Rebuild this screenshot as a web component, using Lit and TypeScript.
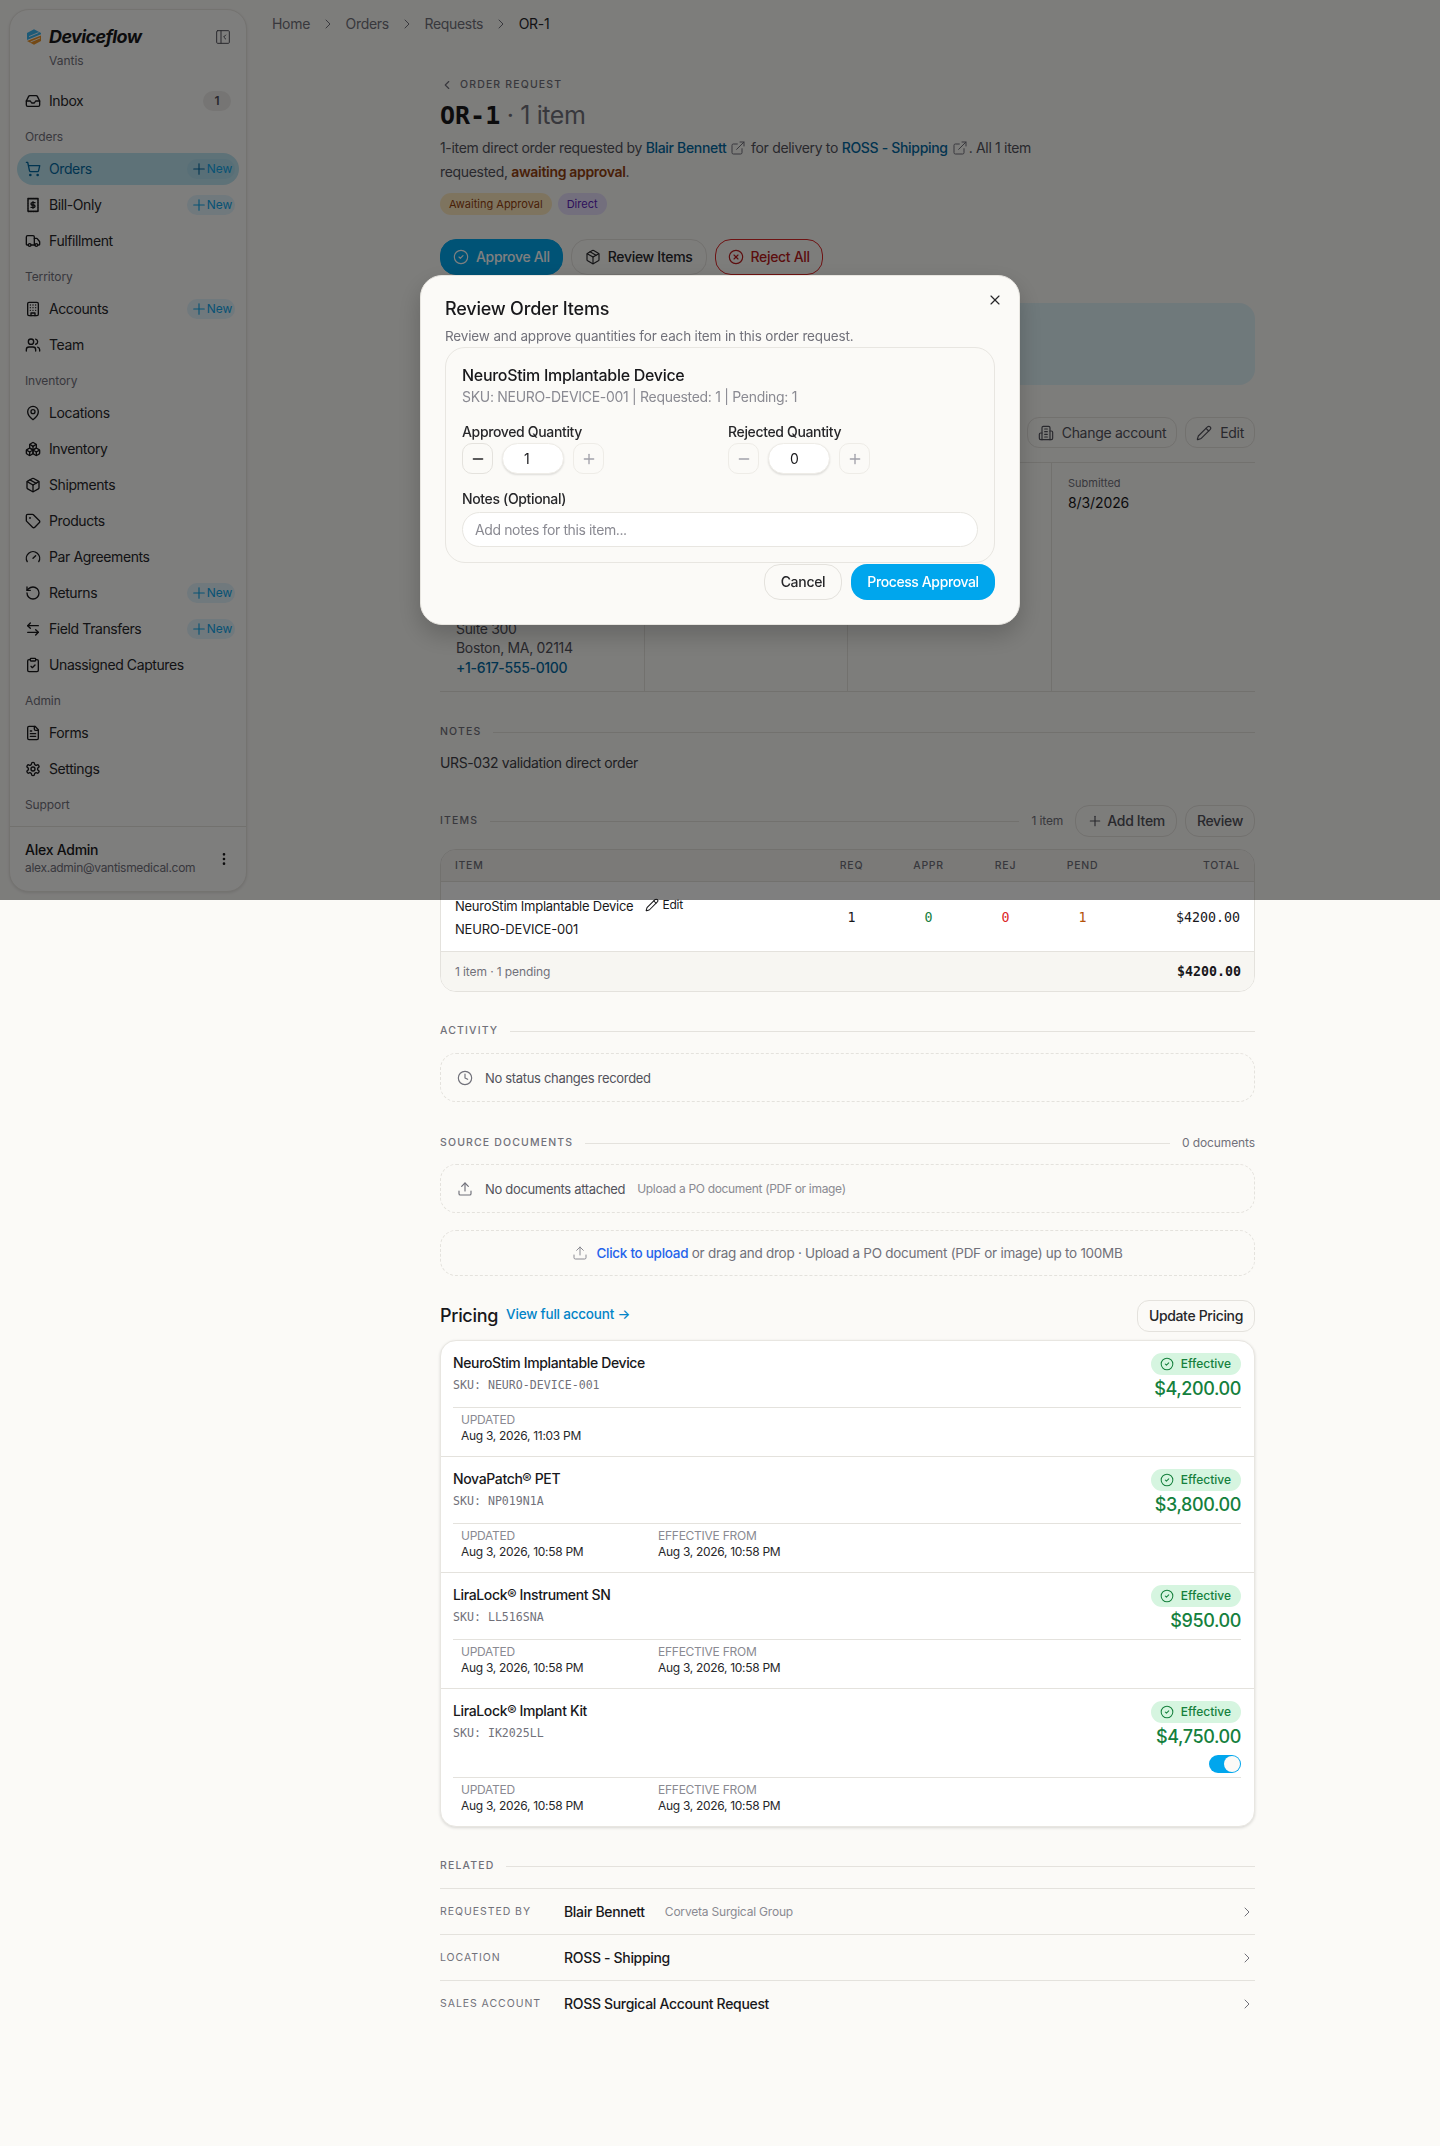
import { LitElement, html, css, svg, nothing } from "lit";
import { customElement } from "lit/decorators.js";

const P: Record<string, any> = {
  inbox: svg`<polyline points="22 12 16 12 14 15 10 15 8 12 2 12"/><path d="M5.45 5.11 2 12v6a2 2 0 0 0 2 2h16a2 2 0 0 0 2-2v-6l-3.45-6.89A2 2 0 0 0 16.76 4H7.24a2 2 0 0 0-1.79 1.11z"/>`,
  cart: svg`<circle cx="8" cy="21" r="1"/><circle cx="19" cy="21" r="1"/><path d="M2.05 2.05h2l2.66 12.42a2 2 0 0 0 2 1.58h9.78a2 2 0 0 0 1.95-1.57l1.65-7.43H5.12"/>`,
  receipt: svg`<rect x="4.5" y="2.5" width="15" height="19" stroke-dasharray="1.4 1.1" stroke-width="2.4"/><path d="M15 8.5h-4.2a1.75 1.75 0 1 0 0 3.5h2.4a1.75 1.75 0 1 1 0 3.5H9"/><path d="M12 7v10"/>`,
  truck: svg`<path d="M14 18V6a2 2 0 0 0-2-2H4a2 2 0 0 0-2 2v11a1 1 0 0 0 1 1h2"/><path d="M15 18H9"/><path d="M19 18h2a1 1 0 0 0 1-1v-3.65a1 1 0 0 0-.22-.624l-3.48-4.35A1 1 0 0 0 17.52 8H14"/><circle cx="17" cy="18" r="2"/><circle cx="7" cy="18" r="2"/>`,
  building: svg`<rect x="4" y="2" width="16" height="20" rx="2"/><path d="M9 22v-4h6v4"/><path d="M8 6h.01M16 6h.01M12 6h.01M12 10h.01M12 14h.01M16 10h.01M16 14h.01M8 10h.01M8 14h.01"/>`,
  users: svg`<path d="M16 21v-2a4 4 0 0 0-4-4H6a4 4 0 0 0-4 4v2"/><circle cx="9" cy="7" r="4"/><path d="M22 21v-2a4 4 0 0 0-3-3.87"/><path d="M16 3.13a4 4 0 0 1 0 7.75"/>`,
  pin: svg`<path d="M20 10c0 6-8 12-8 12s-8-6-8-12a8 8 0 0 1 16 0Z"/><circle cx="12" cy="10" r="3"/>`,
  boxes: svg`<path d="M2.97 12.92A2 2 0 0 0 2 14.63v3.24a2 2 0 0 0 .97 1.71l3 1.8a2 2 0 0 0 2.06 0L12 19v-5.5l-5-3-4.03 2.42Z"/><path d="m7 16.5-4.74-2.85"/><path d="m7 16.5 5-3"/><path d="M7 16.5v5.17"/><path d="M12 13.5V19l3.97 2.38a2 2 0 0 0 2.06 0l3-1.8a2 2 0 0 0 .97-1.71v-3.24a2 2 0 0 0-.97-1.71L17 10.5l-5 3Z"/><path d="m17 16.5-5-3"/><path d="m17 16.5 4.74-2.85"/><path d="M17 16.5v5.17"/><path d="M7.97 4.42A2 2 0 0 0 7 6.13v4.37l5 3 5-3V6.13a2 2 0 0 0-.97-1.71l-3-1.8a2 2 0 0 0-2.06 0l-3 1.8Z"/><path d="M12 8 7.26 5.15"/><path d="m12 8 4.74-2.85"/><path d="M12 13.5V8"/>`,
  pkg: svg`<path d="M11 21.73a2 2 0 0 0 2 0l7-4A2 2 0 0 0 21 16V8a2 2 0 0 0-1-1.73l-7-4a2 2 0 0 0-2 0l-7 4A2 2 0 0 0 3 8v8a2 2 0 0 0 1 1.73z"/><path d="M12 22V12"/><polyline points="3.29 7 12 12 20.71 7"/><path d="m7.5 4.27 9 5.15"/>`,
  tag: svg`<path d="M12.586 2.586A2 2 0 0 0 11.172 2H4a2 2 0 0 0-2 2v7.172a2 2 0 0 0 .586 1.414l8.704 8.704a2.426 2.426 0 0 0 3.42 0l6.58-6.58a2.426 2.426 0 0 0 0-3.42z"/><circle cx="7.5" cy="7.5" r=".5"/>`,
  gauge: svg`<path d="m12 14 4-4"/><path d="M3.34 19a10 10 0 1 1 17.32 0"/>`,
  rotate: svg`<path d="M3 12a9 9 0 1 0 9-9 9.75 9.75 0 0 0-6.74 2.74L3 8"/><path d="M3 3v5h5"/>`,
  swap: svg`<path d="M8 3 4 7l4 4"/><path d="M4 7h16"/><path d="m16 21 4-4-4-4"/><path d="M20 17H4"/>`,
  clip: svg`<rect x="8" y="2" width="8" height="4" rx="1"/><path d="M16 4h2a2 2 0 0 1 2 2v14a2 2 0 0 1-2 2H6a2 2 0 0 1-2-2V6a2 2 0 0 1 2-2h2"/><path d="m9 14 2 2 4-4"/>`,
  file: svg`<path d="M15 2H6a2 2 0 0 0-2 2v16a2 2 0 0 0 2 2h12a2 2 0 0 0 2-2V7Z"/><path d="M14 2v4a2 2 0 0 0 2 2h4"/><path d="M10 9H8"/><path d="M16 13H8"/><path d="M16 17H8"/>`,
  gear: svg`<path d="M12.22 2h-.44a2 2 0 0 0-2 2v.18a2 2 0 0 1-1 1.73l-.43.25a2 2 0 0 1-2 0l-.15-.08a2 2 0 0 0-2.73.73l-.22.38a2 2 0 0 0 .73 2.73l.15.1a2 2 0 0 1 1 1.72v.51a2 2 0 0 1-1 1.74l-.15.09a2 2 0 0 0-.73 2.73l.22.38a2 2 0 0 0 2.73.73l.15-.08a2 2 0 0 1 2 0l.43.25a2 2 0 0 1 1 1.73V20a2 2 0 0 0 2 2h.44a2 2 0 0 0 2-2v-.18a2 2 0 0 1 1-1.73l.43-.25a2 2 0 0 1 2 0l.15.08a2 2 0 0 0 2.73-.73l.22-.39a2 2 0 0 0-.73-2.73l-.15-.08a2 2 0 0 1-1-1.74v-.5a2 2 0 0 1 1-1.74l.15-.09a2 2 0 0 0 .73-2.73l-.22-.38a2 2 0 0 0-2.73-.73l-.15.08a2 2 0 0 1-2 0l-.43-.25a2 2 0 0 1-1-1.73V4a2 2 0 0 0-2-2z"/><circle cx="12" cy="12" r="3"/>`,
  panel: svg`<rect x="2.5" y="2.5" width="19" height="19" rx="1.5"/><path d="M9 2.5v19"/><path d="m16 15-3-3 3-3"/>`,
  dots: svg`<circle cx="12" cy="12" r="1"/><circle cx="12" cy="5" r="1"/><circle cx="12" cy="19" r="1"/>`,
  left: svg`<path d="m15 18-6-6 6-6"/>`,
  right: svg`<path d="m9 18 6-6-6-6"/>`,
  x: svg`<path d="M18 6 6 18"/><path d="m6 6 12 12"/>`,
  plus: svg`<path d="M5 12h14"/><path d="M12 5v14"/>`,
  minus: svg`<path d="M5 12h14"/>`,
  ext: svg`<path d="M15 3h6v6"/><path d="M10 14 21 3"/><path d="M18 13v6a2 2 0 0 1-2 2H5a2 2 0 0 1-2-2V8a2 2 0 0 1 2-2h6"/>`,
  check: svg`<circle cx="12" cy="12" r="10"/><path d="m9 12 2 2 4-4"/>`,
  xc: svg`<circle cx="12" cy="12" r="10"/><path d="m15 9-6 6"/><path d="m9 9 6 6"/>`,
  pencil: svg`<path d="M21.174 6.812a1 1 0 0 0-3.986-3.987L3.842 16.174a2 2 0 0 0-.5.83l-1.321 4.352a.5.5 0 0 0 .623.622l4.353-1.32a2 2 0 0 0 .83-.497z"/><path d="m15 5 4 4"/>`,
  b2: svg`<path d="M6 22V4a2 2 0 0 1 2-2h8a2 2 0 0 1 2 2v18Z"/><path d="M6 12H4a2 2 0 0 0-2 2v6a2 2 0 0 0 2 2h2"/><path d="M18 9h2a2 2 0 0 1 2 2v9a2 2 0 0 1-2 2h-2"/><path d="M10 6h4"/><path d="M10 10h4"/><path d="M10 14h4"/><path d="M10 18h4"/>`,
  clock: svg`<circle cx="12" cy="12" r="10"/><polyline points="12 6 12 12 16 14"/>`,
  upload: svg`<path d="M21 15v4a2 2 0 0 1-2 2H5a2 2 0 0 1-2-2v-4"/><polyline points="17 8 12 3 7 8"/><line x1="12" y1="3" x2="12" y2="15"/>`,
};

const ic = (n: string, s = 16, w = 2) =>
  html`<svg class="ic" width=${s} height=${s} viewBox="0 0 24 24" fill="none" stroke="currentColor" stroke-width=${w} stroke-linecap="round" stroke-linejoin="round">${P[n]}</svg>`;

type NavRow = { label: string; icon: string; isNew?: boolean; active?: boolean; count?: string };
const NAV: { title?: string; rows: NavRow[] }[] = [
  { rows: [{ label: "Inbox", icon: "inbox", count: "1" }] },
  { title: "Orders", rows: [
    { label: "Orders", icon: "cart", isNew: true, active: true },
    { label: "Bill-Only", icon: "receipt", isNew: true },
    { label: "Fulfillment", icon: "truck" },
  ] },
  { title: "Territory", rows: [
    { label: "Accounts", icon: "building", isNew: true },
    { label: "Team", icon: "users" },
  ] },
  { title: "Inventory", rows: [
    { label: "Locations", icon: "pin" },
    { label: "Inventory", icon: "boxes" },
    { label: "Shipments", icon: "pkg" },
    { label: "Products", icon: "tag" },
    { label: "Par Agreements", icon: "gauge" },
    { label: "Returns", icon: "rotate", isNew: true },
    { label: "Field Transfers", icon: "swap", isNew: true },
    { label: "Unassigned Captures", icon: "clip" },
  ] },
  { title: "Admin", rows: [
    { label: "Forms", icon: "file" },
    { label: "Settings", icon: "gear" },
  ] },
  { title: "Support", rows: [] },
];

const PRICES = [
  { name: "NeuroStim Implantable Device", sku: "NEURO-DEVICE-001", price: "$4,200.00", updated: "Aug 3, 2026, 11:03 PM", from: "" },
  { name: "NovaPatch® PET", sku: "NP019N1A", price: "$3,800.00", updated: "Aug 3, 2026, 10:58 PM", from: "Aug 3, 2026, 10:58 PM" },
  { name: "LiraLock® Instrument SN", sku: "LL516SNA", price: "$950.00", updated: "Aug 3, 2026, 10:58 PM", from: "Aug 3, 2026, 10:58 PM" },
  { name: "LiraLock® Implant Kit", sku: "IK2025LL", price: "$4,750.00", updated: "Aug 3, 2026, 10:58 PM", from: "Aug 3, 2026, 10:58 PM", toggle: true },
];

@customElement("app-root")
export class AppRoot extends LitElement {
  static styles = css`
    :host {
      display: block; position: relative; min-height: 2146px; background: #fbfaf7; color: #18181b;
      font-family: Inter, "Noto Sans", sans-serif; font-size: 14px; line-height: 20px; letter-spacing: -0.32px;
    }
    * { box-sizing: border-box; }
    .ic { display: block; flex: none; }
    .page { display: flex; align-items: flex-start; }

    .side { flex: none; width: 238px; height: 883px; margin: 9px 8px 0 9px; background: #fdfcfa; border: 1px solid #e8e6e1; border-radius: 20px; box-shadow: 0 1px 3px rgba(0,0,0,.1); display: flex; flex-direction: column; letter-spacing: -0.4px; }
    .brand { padding: 17px 15px 0 16px; display: flex; align-items: center; height: 36px; }
    .logo { width: 16px; height: 16px; margin-right: 7px; }
    .brandname { font-size: 18px; font-weight: 700; font-style: italic; letter-spacing: -0.6px; line-height: 22px; flex: 1; }
    .panelbtn { color: #52525b; }
    .org { margin: 7px 0 0 39px; font-size: 12px; line-height: 16px; color: #71717a; letter-spacing: 0; }
    .nav { flex: 1; padding: 16px 7px 0; }
    .grouplabel { margin: 12px 0 8px 8px; font-size: 12px; line-height: 16px; color: #71717a; letter-spacing: -0.1px; }
    .rows { display: flex; flex-direction: column; gap: 4px; }
    .row { height: 32px; display: flex; align-items: center; padding: 0 4px 0 8px; gap: 8px; border-radius: 16px; color: #27272a; }
    .row .ic { color: #18181b; }
    .row.active { background: #bde4f0; color: #0369a1; }
    .row.active .ic { color: #0369a1; }
    .rowlabel { flex: 1; }
    .newpill { width: 48px; height: 20px; border-radius: 10px; background: #e0f2fa; color: #0ea5e9; display: flex; align-items: center; justify-content: center; gap: 0; font-size: 12px; letter-spacing: -0.1px; }
    .newpill .ic { color: #0ea5e9; margin-right: -1px; }
    .row.active .newpill { background: #b0deee; }
    .count { width: 28px; height: 20px; margin-right: 4px; border-radius: 10px; background: #ecebe8; font-size: 12px; font-weight: 600; color: #52525b; text-align: center; letter-spacing: 0; }
    .sidefoot { border-top: 1px solid #e4e2dd; height: 65px; display: flex; align-items: center; padding: 0 14px 0 15px; }
    .sidefoot .who { flex: 1; }
    .who b { display: block; font-weight: 500; font-size: 14px; line-height: 18px; letter-spacing: -0.25px; color: #18181b; }
    .who span { display: block; font-size: 12px; line-height: 18px; color: #71717a; letter-spacing: -0.3px; }

    .main { flex: 1; min-width: 0; }
    .crumbs { height: 47px; padding: 0 0 0 17px; display: flex; align-items: center; font-size: 14px; letter-spacing: -0.3px; color: #71717a; }
    .crumbs .sep { width: 35.5px; display: flex; justify-content: center; }
    .crumbs .now { color: #27272a; }
    .content { width: 815px; margin: 30px auto 0; }

    .eyebrow { height: 16px; display: flex; align-items: center; color: #71717a; }
    .eyebrow .txt { margin-left: 6px; }
    .caps { font-size: 10.5px; font-weight: 500; letter-spacing: 1.15px; line-height: 14px; text-transform: uppercase; color: #71717a; }
    .title { margin: 6px 0 0; height: 32px; line-height: 32px; font-size: 25px; font-weight: 400; color: #71717a; letter-spacing: -0.4px; display: flex; align-items: baseline; white-space: pre; }
    .title b { font-family: "DejaVu Sans Mono", "Liberation Mono", monospace; font-size: 25px; font-weight: 700; color: #18181b; letter-spacing: 0; }
    .desc { margin: 5px 0 0; width: 640px; line-height: 24px; color: #52525b; }
    .desc a { color: #0369a1; font-weight: 500; }
    .extic { display: inline-block; height: 16px; line-height: 0; vertical-align: -3px; margin: 0 1px 0 4px; color: #71717a; }
    .desc b { color: #92400e; font-weight: 600; }
    .badges { margin-top: 9px; display: flex; gap: 6px; }
    .badge { height: 22px; line-height: 22px; padding: 0 9px; border-radius: 11px; font-size: 11px; letter-spacing: 0; }
    .badge.amber { background: #fde9bf; color: #92400e; }
    .badge.violet { background: #e6defb; color: #5b21b6; }
    .actions { margin-top: 24px; display: flex; gap: 8px; }
    .btn { height: 36px; border-radius: 16px; padding: 0 12px; display: inline-flex; align-items: center; gap: 7px; background: transparent; border: 1px solid #e4e2dd; color: #27272a; font-weight: 500; white-space: nowrap; }
    .btn.wide { padding: 0 13px; }
    .btn.primary { background: #00a6ed; border-color: #00a6ed; color: #fff; }
    .btn.danger { border-color: #dc2626; color: #b91c1c; }
    .banner { margin-top: 28px; height: 82px; border-radius: 16px; background: #dff2f6; padding: 16px; }
    .sechead { margin-top: 32px; height: 31px; display: flex; align-items: center; justify-content: flex-end; gap: 8px; }
    .sm { height: 31px; border-radius: 12px; padding: 0 10px; display: inline-flex; align-items: center; gap: 8px; border: 1px solid #e4e2dd; font-size: 14px; color: #52525b; letter-spacing: -0.3px; white-space: nowrap; background: transparent; }
    .facts { margin-top: 14px; height: 230px; display: grid; grid-template-columns: 204px 203px 204px 204px; border-top: 1px solid #e4e2dd; border-bottom: 1px solid #e4e2dd; }
    .fact { padding: 12px 16px 14px 16px; display: flex; flex-direction: column; }
    .fact + .fact { border-left: 1px solid #e4e2dd; }
    .factlabel { font-size: 11px; line-height: 16px; color: #71717a; letter-spacing: 0; }
    .factvalue { font-size: 14px; line-height: 24px; color: #18181b; letter-spacing: -0.1px; }
    .addr { margin-top: auto; color: #52525b; line-height: 19.5px; }
    .addr a { display: block; color: #0369a1; font-weight: 500; }

    .divider { display: flex; align-items: center; gap: 12px; height: 14px; }
    .divider .line { flex: 1; height: 1px; background: #e4e2dd; }
    .notes { margin-top: 33px; }
    .notestxt { margin-top: 14px; color: #3f3f46; letter-spacing: -0.37px; }
    .itemshead { margin-top: 32px; height: 32px; display: flex; align-items: center; gap: 12px; }
    .itemshead .line { flex: 1; height: 1px; background: #e4e2dd; }
    .meta12 { font-size: 12px; color: #71717a; letter-spacing: -0.1px; }
    .btn32 { height: 32px; border-radius: 14px; padding: 0 11px; display: inline-flex; align-items: center; gap: 4px; border: 1px solid #e4e2dd; background: transparent; color: #52525b; font-weight: 500; font-size: 14px; white-space: nowrap; }
    .itembtns { display: flex; gap: 8px; }

    .table { margin-top: 12px; border: 1px solid #e4e2dd; border-radius: 16px; overflow: hidden; background: #fff; }
    .trow { display: grid; grid-template-columns: 358px 77px 77px 77px 77px 119px; padding: 0 13px 0 14px; align-items: center; }
    .thead { height: 32px; background: #f6f5f1; border-bottom: 1px solid #e4e2dd; }
    .thead .caps { font-size: 10.5px; letter-spacing: 0.7px; }
    .ctr { text-align: center; }
    .end { text-align: right; }
    .tbody { height: 69px; padding-top: 5px; padding-bottom: 3px; background: #fff; }
    .tname { display: flex; align-items: center; font-size: 13px; line-height: 20px; letter-spacing: -0.25px; }
    .edit { display: inline-flex; align-items: center; gap: 3px; margin-left: 12px; font-size: 12px; letter-spacing: -0.2px; margin-top: -2px; }
    .tsku { margin-top: 3px; font-size: 13px; line-height: 20px; letter-spacing: -0.2px; }
    .mono { font-family: "DejaVu Sans Mono", "Liberation Mono", monospace; font-size: 13.3px; letter-spacing: 0; }
    .green { color: #15803d; } .red { color: #dc2626; } .orange { color: #b45309; }
    .tfoot { height: 40px; background: #f7f6f2; border-top: 1px solid #e4e2dd; display: flex; align-items: center; justify-content: space-between; padding: 0 13px 0 14px; }
    .tfoot b { font-weight: 700; }

    .activity { margin-top: 32px; }
    .dash { margin-top: 15px; height: 49px; border: 1px dashed #e4e2dd; border-radius: 16px; display: flex; align-items: center; padding-left: 16px; color: #52525b; font-size: 13px; }
    .dash .ic { color: #71717a; margin-right: 12px; }
    .dash .sub { margin-left: 12px; font-size: 12px; color: #8a8a92; letter-spacing: -0.32px; }
    .docs { margin-top: 32px; height: 18px; }
    .docs .meta12 { line-height: 18px; }
    .docs + .dash { margin-top: 12px; }
    .drop { margin-top: 17px; height: 46px; border: 1px dashed #e4e2dd; border-radius: 16px; display: flex; align-items: center; justify-content: center; gap: 6px; font-size: 13.5px; letter-spacing: -0.28px; color: #71717a; }
    .drop a { color: #2563eb; font-weight: 500; }
    .drop .ic { color: #8a8a92; margin-right: 2px; }

    .pricehead { margin-top: 24px; height: 32px; display: flex; align-items: center; }
    .pricehead h3 { margin: 0; font-size: 18px; font-weight: 500; letter-spacing: -0.3px; color: #18181b; }
    .pricehead a { margin-left: 8px; margin-top: -4px; font-size: 13.5px; font-weight: 500; letter-spacing: -0.2px; color: #0284c7; flex: 1; }
    .pricebtn { height: 32px; border-radius: 12px; padding: 0 11px; border: 1px solid #e4e2dd; background: transparent; display: flex; align-items: center; font-weight: 500; font-size: 14px; letter-spacing: -0.35px; color: #27272a; }
    .pcard { margin-top: 8px; border: 1px solid #e8e6e1; border-radius: 16px; background: #fff; box-shadow: 0 1px 3px rgba(0,0,0,.14); overflow: hidden; }
    .pitem { padding: 12px 13px 0 12px; }
    .pitem + .pitem { border-top: 1px solid #e4e2dd; }
    .ptop { display: flex; justify-content: space-between; align-items: flex-start; padding-bottom: 4px; border-bottom: 1px solid #e4e2dd; }
    .pname { font-weight: 500; line-height: 20px; color: #18181b; letter-spacing: -0.36px; }
    .psku { margin-top: 4px; font-family: "DejaVu Sans Mono", "Liberation Mono", monospace; font-size: 11.6px; line-height: 16px; letter-spacing: 0; color: #71717a; }
    .pright { display: flex; flex-direction: column; align-items: flex-end; }
    .eff { height: 22px; border-radius: 11px; background: #d6f5e0; color: #15803d; display: flex; align-items: center; gap: 7px; padding: 0 10px 0 9px; font-size: 12px; letter-spacing: 0; font-weight: 500; }
    .price { font-size: 18px; line-height: 28px; font-weight: 500; color: #15803d; letter-spacing: -0.4px; }
    .toggle { width: 32px; height: 18px; border-radius: 9px; background: #00a6ed; margin-top: 4px; padding: 1px; display: flex; justify-content: flex-end; }
    .toggle i { display: block; width: 16px; height: 16px; border-radius: 50%; background: #fbfaf7; }
    .pmeta { display: flex; padding: 4px 8px 12px; min-height: 48px; }
    .pmeta > div { width: 197px; }
    .pmeta span { display: block; font-size: 12px; line-height: 16px; color: #8a8a92; letter-spacing: -0.25px; }
    .pmeta p { margin: 0; font-size: 12px; line-height: 16px; color: #27272a; letter-spacing: -0.3px; }

    .related { margin-top: 32px; }
    .rellist { margin-top: 15px; }
    .rel { height: 46px; display: flex; align-items: center; border-top: 1px solid #e4e2dd; }
    .rel .caps { width: 124px; font-size: 10.5px; letter-spacing: 0.95px; font-weight: 400; }
    .rel b { font-weight: 500; color: #18181b; font-size: 14px; }
    .rel .org2 { margin-left: 20px; font-size: 12px; color: #8a8a92; letter-spacing: -0.2px; }
    .rel .grow { flex: 1; }
    .rel .ic { color: #71717a; }

    .overlay { position: absolute; left: 0; top: 0; width: 100%; height: 900px; background: rgba(0,0,0,.5); backdrop-filter: blur(.5px); display: flex; align-items: center; justify-content: center; }
    .modal { width: 600px; height: 350px; border-radius: 22px; background: #fbfaf7; border: 1px solid #e8e6e1; box-shadow: 0 10px 25px rgba(0,0,0,.2); padding: 23px 24px 0; position: relative; }
    .close { position: absolute; top: 16px; right: 16px; color: #27272a; }
    .mtitle { margin: 0; font-size: 18px; line-height: 20px; font-weight: 500; letter-spacing: -0.2px; color: #18181b; }
    .mdesc { margin-top: 7px; font-size: 13.5px; line-height: 20px; color: #71717a; letter-spacing: -0.15px; }
    .mcard { margin-top: 1px; height: 216px; border: 1px solid #e8e6e1; border-radius: 20px; padding: 16px 16px 0 16px; }
    .mname { font-size: 16px; line-height: 22px; font-weight: 500; color: #18181b; letter-spacing: -0.3px; }
    .msku { margin-top: 1px; color: #8a8a92; line-height: 20px; letter-spacing: -0.3px; }
    .qtys { margin-top: 15px; display: grid; grid-template-columns: 266px 1fr; }
    .qlabel { line-height: 20px; font-weight: 500; color: #27272a; letter-spacing: -0.35px; }
    .stepper { margin-top: 1px; display: flex; gap: 9px; }
    .stepbtn { width: 31px; height: 31px; border: 1px solid #eeece7; border-radius: 10px; display: flex; align-items: center; justify-content: center; color: #a1a1aa; }
    .stepbtn.on { color: #27272a; border-color: #e4e2dd; }
    .qinput { width: 62px; height: 31px; border-radius: 16px; background: #fff; box-shadow: 0 1px 2px rgba(0,0,0,.12); border: 1px solid #eeece7; display: flex; align-items: center; padding-left: 21px; color: #18181b; font-size: 14px; letter-spacing: 0; }
    .notesl { margin-top: 15px; }
    .minput { margin-top: 3px; height: 35px; border: 1px solid #e8e6e1; border-radius: 18px; background: #fff; padding-left: 12px; display: flex; align-items: center; color: #8a8a92; letter-spacing: -0.38px; }
    .mfoot { margin-top: 1px; display: flex; justify-content: flex-end; gap: 9px; }
    .mbtn { height: 36px; border-radius: 16px; display: flex; align-items: center; justify-content: center; font-weight: 500; font-size: 14px; letter-spacing: -0.3px; }
    .mbtn.cancel { width: 78px; border: 1px solid #e4e2dd; color: #27272a; }
    .mbtn.go { width: 144px; background: #00a6ed; color: #fff; letter-spacing: -0.4px; }
  `;

  private stepper(v: string, minusOn: boolean) {
    return html`<div class="stepper">
      <div class="stepbtn ${minusOn ? "on" : ""}">${ic("minus", 16)}</div>
      <div class="qinput">${v}</div>
      <div class="stepbtn">${ic("plus", 16)}</div>
    </div>`;
  }

  private sidebar() {
    return html`<aside class="side">
      <div class="brand">
        <svg class="logo" viewBox="0 0 16 16">
          <path d="M8 .3 15 4v1.2L1 11V4Z" fill="#3ab4ee"/>
          <path d="M15 6.4V12L8 15.7 1 12Z" fill="#e8922a"/>
          <path d="M3 7.6 12.5 3.6M4.5 13 14 9" stroke="#fdfcfa" stroke-width=".9" fill="none"/>
        </svg>
        <span class="brandname">Deviceflow</span>
        <span class="panelbtn">${ic("panel", 16, 1.5)}</span>
      </div>
      <div class="org">Vantis</div>
      <div class="nav">
        ${NAV.map((g) => html`
          ${g.title ? html`<div class="grouplabel">${g.title}</div>` : nothing}
          <div class="rows">
            ${g.rows.map((r) => html`<div class="row ${r.active ? "active" : ""}">
              ${ic(r.icon, 16)}<span class="rowlabel">${r.label}</span>
              ${r.isNew ? html`<span class="newpill">${ic("plus", 18, 1.5)}New</span>` : nothing}
              ${r.count ? html`<span class="count">${r.count}</span>` : nothing}
            </div>`)}
          </div>`)}
      </div>
      <div class="sidefoot">
        <div class="who"><b>Alex Admin</b><span>alex.admin@vantismedical.com</span></div>
        ${ic("dots", 16)}
      </div>
    </aside>`;
  }

  private pricing() {
    return PRICES.map((p) => html`<div class="pitem">
      <div class="ptop">
        <div><div class="pname">${p.name}</div><div class="psku">SKU: ${p.sku}</div></div>
        <div class="pright">
          <div class="eff">${ic("check", 14, 1.75)}Effective</div>
          <div class="price">${p.price}</div>
          ${(p as any).toggle ? html`<div class="toggle"><i></i></div>` : nothing}
        </div>
      </div>
      <div class="pmeta">
        <div><span>UPDATED</span><p>${p.updated}</p></div>
        ${p.from ? html`<div><span>EFFECTIVE FROM</span><p>${p.from}</p></div>` : nothing}
      </div>
    </div>`);
  }

  render() {
    return html`
      <div class="page">
        ${this.sidebar()}
        <main class="main">
          <div class="crumbs">
            <span>Home</span><span class="sep">${ic("right", 16, 1.5)}</span>
            <span>Orders</span><span class="sep">${ic("right", 16, 1.5)}</span>
            <span>Requests</span><span class="sep">${ic("right", 16, 1.5)}</span>
            <span class="now">OR-1</span>
          </div>
          <div class="content">
            <div class="eyebrow">${ic("left", 14)}<span class="caps txt">Order Request</span></div>
            <h1 class="title"><b>OR-1</b> · 1 item</h1>
            <p class="desc">1-item direct order requested by <a>Blair Bennett</a><span class="extic">${ic("ext", 16, 1.5)}</span> for delivery to <a>ROSS - Shipping</a><span class="extic">${ic("ext", 16, 1.5)}</span>. All 1 item requested, <b>awaiting approval</b>.</p>
            <div class="badges"><span class="badge amber">Awaiting Approval</span><span class="badge violet">Direct</span></div>
            <div class="actions">
              <span class="btn primary">${ic("check", 16, 1.75)}Approve All</span>
              <span class="btn wide">${ic("pkg", 16, 1.75)}Review Items</span>
              <span class="btn danger">${ic("xc", 16, 1.75)}Reject All</span>
            </div>
            <div class="banner"></div>
            <div class="sechead">
              <span class="sm">${ic("b2", 16, 1.75)}Change account</span>
              <span class="sm">${ic("pencil", 16, 1.75)}Edit</span>
            </div>
            <div class="facts">
              <div class="fact"><span class="factlabel">Ship to</span><span class="factvalue">ROSS - Shipping</span>
                <div class="addr">Suite 300<br />Boston, MA, 02114<a>+1-617-555-0100</a></div></div>
              <div class="fact"><span class="factlabel">Requested by</span><span class="factvalue">Blair Bennett</span></div>
              <div class="fact"><span class="factlabel">Account</span><span class="factvalue">ROSS Surgical</span></div>
              <div class="fact"><span class="factlabel">Submitted</span><span class="factvalue">8/3/2026</span></div>
            </div>
            <div class="notes divider"><span class="caps">Notes</span><span class="line"></span></div>
            <div class="notestxt">URS-032 validation direct order</div>
            <div class="itemshead">
              <span class="caps">Items</span><span class="line"></span><span class="meta12">1 item</span>
              <div class="itembtns"><span class="btn32">${ic("plus", 16, 1.75)}Add Item</span><span class="btn32">Review</span></div>
            </div>
            <div class="table">
              <div class="trow thead">
                <span class="caps">Item</span><span class="caps ctr">Req</span><span class="caps ctr">Appr</span><span class="caps ctr">Rej</span><span class="caps ctr">Pend</span><span class="caps end">Total</span>
              </div>
              <div class="trow tbody">
                <div><div class="tname">NeuroStim Implantable Device<span class="edit">${ic("pencil", 14, 1.75)}Edit</span></div><div class="tsku">NEURO-DEVICE-001</div></div>
                <span class="mono ctr">1</span><span class="mono ctr green">0</span><span class="mono ctr red">0</span><span class="mono ctr orange">1</span><span class="mono end">$4200.00</span>
              </div>
              <div class="tfoot"><span class="meta12">1 item · 1 pending</span><b class="mono">$4200.00</b></div>
            </div>
            <div class="activity divider"><span class="caps">Activity</span><span class="line"></span></div>
            <div class="dash">${ic("clock", 16, 1.75)}<span>No status changes recorded</span></div>
            <div class="docs divider"><span class="caps">Source Documents</span><span class="line"></span><span class="meta12">0 documents</span></div>
            <div class="dash">${ic("upload", 16, 1.75)}<span>No documents attached</span><span class="sub">Upload a PO document (PDF or image)</span></div>
            <div class="drop">${ic("upload", 16, 1.5)}<span><a>Click to upload</a> or drag and drop · Upload a PO document (PDF or image) up to 100MB</span></div>
            <div class="pricehead"><h3>Pricing</h3><a>View full account →</a><span class="pricebtn">Update Pricing</span></div>
            <div class="pcard">${this.pricing()}</div>
            <div class="related divider"><span class="caps">Related</span><span class="line"></span></div>
            <div class="rellist">
              <div class="rel"><span class="caps">Requested by</span><b>Blair Bennett</b><span class="org2">Corveta Surgical Group</span><span class="grow"></span>${ic("right", 16, 1.5)}</div>
              <div class="rel"><span class="caps">Location</span><b>ROSS - Shipping</b><span class="grow"></span>${ic("right", 16, 1.5)}</div>
              <div class="rel"><span class="caps">Sales Account</span><b>ROSS Surgical Account Request</b><span class="grow"></span>${ic("right", 16, 1.5)}</div>
            </div>
          </div>
        </main>
      </div>
      <div class="overlay">
        <div class="modal">
          <span class="close">${ic("x", 16, 1.75)}</span>
          <h2 class="mtitle">Review Order Items</h2>
          <div class="mdesc">Review and approve quantities for each item in this order request.</div>
          <div class="mcard">
            <div class="mname">NeuroStim Implantable Device</div>
            <div class="msku">SKU: NEURO-DEVICE-001 | Requested: 1 | Pending: 1</div>
            <div class="qtys">
              <div><div class="qlabel">Approved Quantity</div>${this.stepper("1", true)}</div>
              <div><div class="qlabel">Rejected Quantity</div>${this.stepper("0", false)}</div>
            </div>
            <div class="qlabel notesl">Notes (Optional)</div>
            <div class="minput">Add notes for this item...</div>
          </div>
          <div class="mfoot"><span class="mbtn cancel">Cancel</span><span class="mbtn go">Process Approval</span></div>
        </div>
      </div>
    `;
  }
}
